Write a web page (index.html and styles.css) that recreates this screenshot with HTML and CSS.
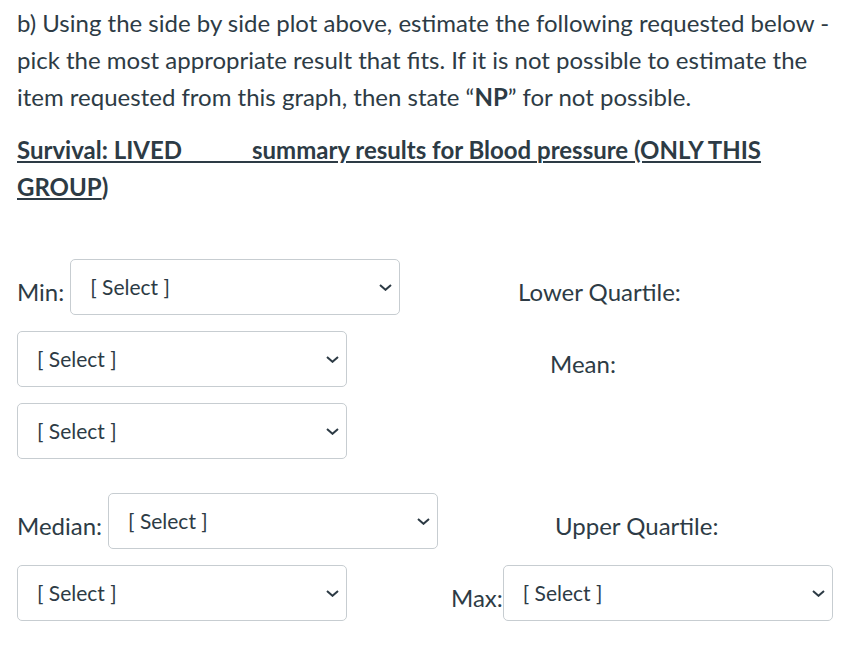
FILE: index.html
```html
<!DOCTYPE html>
<html>
<head>
<meta charset="utf-8">
<link rel="stylesheet" href="styles.css">
</head>
<body>
<div class="page">
  <p class="intro">b) Using the side by side plot above, estimate the following requested below - pick the most appropriate result that fits. If it is not possible to estimate the item requested from this graph, then state “<strong>NP</strong>” for not possible.</p>
  <p class="heading"><u>Survival: LIVED&nbsp;&nbsp;&nbsp;&nbsp;&nbsp;&nbsp;&nbsp;&nbsp;&nbsp;&nbsp;&nbsp; summary results for Blood pressure (ONLY THIS GROUP</u>)</p>
  <div class="grid">
    <div class="cell">
      <span class="label gap">Min:</span>
      <div class="select"><span class="sel-text">[ Select ]</span><svg class="chev" width="13" height="7" viewBox="0 0 13 7"><path d="M1 1 L6.5 5.8 L12 1" fill="none" stroke="#2d3b45" stroke-width="2"/></svg></div>
    </div>
    <div class="cell"><span class="label ind-lq">Lower Quartile:</span></div>

    <div class="cell">
      <div class="select"><span class="sel-text">[ Select ]</span><svg class="chev" width="13" height="7" viewBox="0 0 13 7"><path d="M1 1 L6.5 5.8 L12 1" fill="none" stroke="#2d3b45" stroke-width="2"/></svg></div>
    </div>
    <div class="cell"><span class="label ind-mean">Mean:</span></div>

    <div class="cell">
      <div class="select"><span class="sel-text">[ Select ]</span><svg class="chev" width="13" height="7" viewBox="0 0 13 7"><path d="M1 1 L6.5 5.8 L12 1" fill="none" stroke="#2d3b45" stroke-width="2"/></svg></div>
    </div>
    <div class="cell"></div>

    <div class="cell spaced">
      <span class="label gap">Median:</span>
      <div class="select"><span class="sel-text">[ Select ]</span><svg class="chev" width="13" height="7" viewBox="0 0 13 7"><path d="M1 1 L6.5 5.8 L12 1" fill="none" stroke="#2d3b45" stroke-width="2"/></svg></div>
    </div>
    <div class="cell spaced"><span class="label ind-uq">Upper Quartile:</span></div>

    <div class="cell">
      <div class="select"><span class="sel-text">[ Select ]</span><svg class="chev" width="13" height="7" viewBox="0 0 13 7"><path d="M1 1 L6.5 5.8 L12 1" fill="none" stroke="#2d3b45" stroke-width="2"/></svg></div>
    </div>
    <div class="cell">
      <span class="label ind-max">Max:</span>
      <div class="select"><span class="sel-text">[ Select ]</span><svg class="chev" width="13" height="7" viewBox="0 0 13 7"><path d="M1 1 L6.5 5.8 L12 1" fill="none" stroke="#2d3b45" stroke-width="2"/></svg></div>
    </div>
  </div>
</div>
</body>
</html>
```

FILE: styles.css
```css
html, body {
  margin: 0;
  padding: 0;
  background: #ffffff;
}
body {
  font-family: Lato, "Open Sans", Arial, sans-serif;
  color: #2d3b45;
  font-size: 24px;
  line-height: 37px;
}
.page {
  padding: 4px 17px 0 17px;
}
.intro {
  margin: 0;
}
.intro strong {
  font-weight: 700;
}
.heading {
  margin: 16px 0 0 0;
  font-weight: 700;
}
.heading u {
  text-decoration: underline;
  text-decoration-thickness: 2px;
  text-underline-offset: 2px;
}
.grid {
  margin-top: 54px;
  display: grid;
  grid-template-columns: 435px 1fr;
  row-gap: 16px;
}
.cell {
  display: flex;
  align-items: center;
  min-height: 56px;
}
.cell.spaced {
  margin-top: 18px;
}
.label {
  padding-top: 8px;
  white-space: nowrap;
}
.label.gap {
  margin-right: 6px;
}
.ind-lq { margin-left: 66px; }
.ind-mean { margin-left: 98px; }
.ind-uq { margin-left: 103px; }
.ind-max { margin-left: -1px; }
.select {
  box-sizing: border-box;
  width: 330px;
  height: 56px;
  border: 1px solid #c7cdd1;
  border-radius: 5px;
  background: #fff;
  display: flex;
  align-items: center;
  justify-content: space-between;
  padding: 0 7px 0 19px;
}
.sel-text {
  font-size: 21px;
  line-height: 24px;
  color: #2d3b45;
}
.chev {
  display: block;
}
```
